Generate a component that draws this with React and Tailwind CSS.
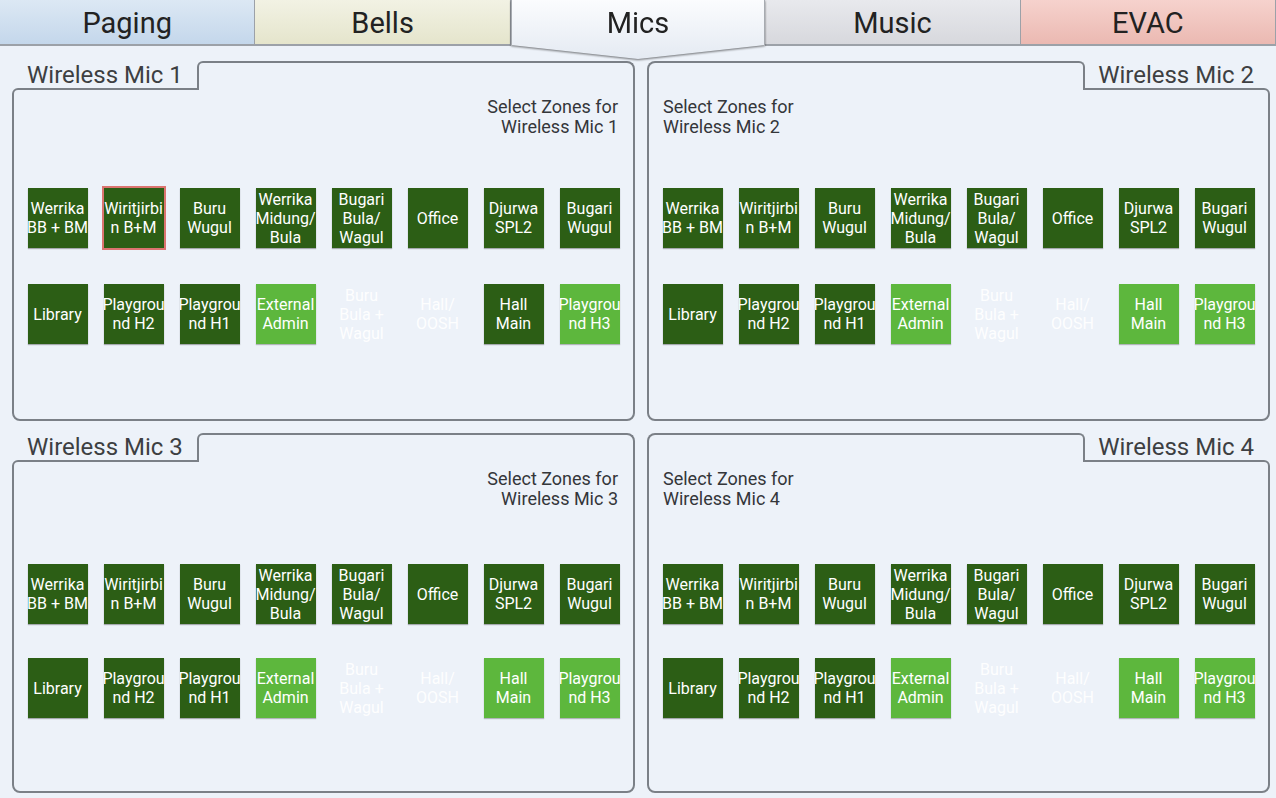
import React from "react";

const TOP_ZONES = [
  "Werrika BB + BM",
  "Wiritjirbin B+M",
  "Buru Wugul",
  "Werrika Midung/ Bula",
  "Bugari Bula/ Wagul",
  "Office",
  "Djurwa SPL2",
  "Bugari Wugul",
];

const BOTTOM_ZONES = [
  "Library",
  "Playground H2",
  "Playground H1",
  "External Admin",
  "Buru Bula + Wagul",
  "Hall/ OOSH",
  "Hall Main",
  "Playground H3",
];

// d = assigned, l = live, o = unavailable
const MICS = [
  { title: "Wireless Mic 1", side: "left", bottom: "dddloodl".split(""), selected: 1, lower: false },
  { title: "Wireless Mic 2", side: "right", bottom: "dddloolll".split(""), lower: false },
  { title: "Wireless Mic 3", side: "left", bottom: "dddloolll".split(""), lower: true },
  { title: "Wireless Mic 4", side: "right", bottom: "dddloolll".split(""), lower: true },
];

const TABS = [
  { name: "Paging", bg: "bg-gradient-to-b from-[#dce8f4] to-[#c4d7eb]" },
  { name: "Bells", bg: "bg-gradient-to-b from-[#f2f2e4] to-[#e5e5cc]" },
  { name: "Mics", active: true },
  { name: "Music", bg: "bg-gradient-to-b from-[#e8e9ed] to-[#d7d8dd]" },
  { name: "EVAC", bg: "bg-gradient-to-b from-[#f6d2cd] to-[#ebb9b2]" },
];

const ZoneButton = ({ label, state, selected }) => {
  const tone =
    state === "l"
      ? "bg-[#5db73d] shadow-[0_1px_1px_rgba(0,0,0,0.25)]"
      : state === "o"
        ? "bg-transparent text-white/95"
        : "bg-[#2c5e15] shadow-[0_1px_1px_rgba(0,0,0,0.3)]";
  return (
    <div
      className={`flex h-[60px] w-[60px] shrink-0 items-center justify-center overflow-hidden text-white ${tone} ${
        selected ? "outline-2 outline-[#dc7470]" : ""
      }`}
    >
      <span className="w-[64px] shrink-0 text-center text-[16px] leading-[19px] [overflow-wrap:break-word]">
        {label}
      </span>
    </div>
  );
};

const MicPanel = ({ title, side, bottom, selected, lower }) => {
  const left = side === "left";
  const label = (
    <div
      className={`flex h-[27px] w-[185px] shrink-0 items-center text-[24px] leading-none text-[#3d3f42] ${
        left ? "pl-[15px]" : "justify-end pr-[16px]"
      }`}
    >
      {title}
    </div>
  );
  const edge = (
    <div
      className={`relative z-10 h-[29px] flex-1 border-2 border-b-0 border-[#7b8087] bg-[#edf2f9] ${
        left ? "rounded-tl-[6px] rounded-tr-[8px]" : "rounded-tl-[8px] rounded-tr-[6px]"
      }`}
    />
  );

  return (
    <div className="flex h-[360px] flex-col">
      <div className="-mb-[2px] flex items-start">
        {left ? label : edge}
        {left ? edge : label}
      </div>
      <div
        className={`flex flex-1 flex-col border-2 border-[#7b8087] rounded-b-[8px] ${
          left ? "rounded-tl-[6px]" : "rounded-tr-[6px]"
        }`}
      >
        <div
          className={`pt-[7px] text-[18px] leading-[20px] text-[#34363a] ${
            left ? "pr-[15px] text-right" : "pl-[14px] text-left"
          }`}
        >
          Select Zones for
          <br />
          {title}
        </div>
        <div className={`flex flex-col ${lower ? "mt-[55px] gap-[34px]" : "mt-[51px] gap-[36px]"}`}>
          <div className="flex justify-center gap-[16px]">
            {TOP_ZONES.map((z, i) => (
              <ZoneButton key={z} label={z} state="d" selected={selected === i} />
            ))}
          </div>
          <div className="flex justify-center gap-[16px]">
            {BOTTOM_ZONES.map((z, i) => (
              <ZoneButton key={z} label={z} state={bottom[i]} />
            ))}
          </div>
        </div>
      </div>
    </div>
  );
};

export default function App() {
  return (
    <div className="h-[798px] w-[1276px] overflow-hidden bg-[#edf2f9] [font-family:Roboto,'Noto_Sans',sans-serif]">
      <div className="flex h-[46px] items-start">
        {TABS.map((t) =>
          t.active ? (
            <div
              key={t.name}
              className="relative z-20 -mb-[14px] h-[60px] flex-1 [filter:drop-shadow(0_1px_1px_rgba(0,0,0,0.55))]"
            >
              <div className="flex h-full items-start justify-center border-x border-[#a7abb1] bg-gradient-to-b from-[#fbfcfe] to-[#e4eaf2] pt-[2px] text-[29px] text-[#222] [clip-path:polygon(0_0,100%_0,100%_45px,50%_59px,0_45px)]">
                {t.name}
              </div>
            </div>
          ) : (
            <div
              key={t.name}
              className={`flex h-[46px] flex-1 items-start justify-center border-b-2 border-r border-[#9ca1a8] pt-[2px] text-[29px] text-[#222] ${t.bg}`}
            >
              {t.name}
            </div>
          )
        )}
      </div>
      <div className="grid grid-cols-[623px_623px] gap-x-[12px] gap-y-[12px] pl-[12px] pt-[15px]">
        {MICS.map((m) => (
          <MicPanel key={m.title} {...m} />
        ))}
      </div>
    </div>
  );
}
